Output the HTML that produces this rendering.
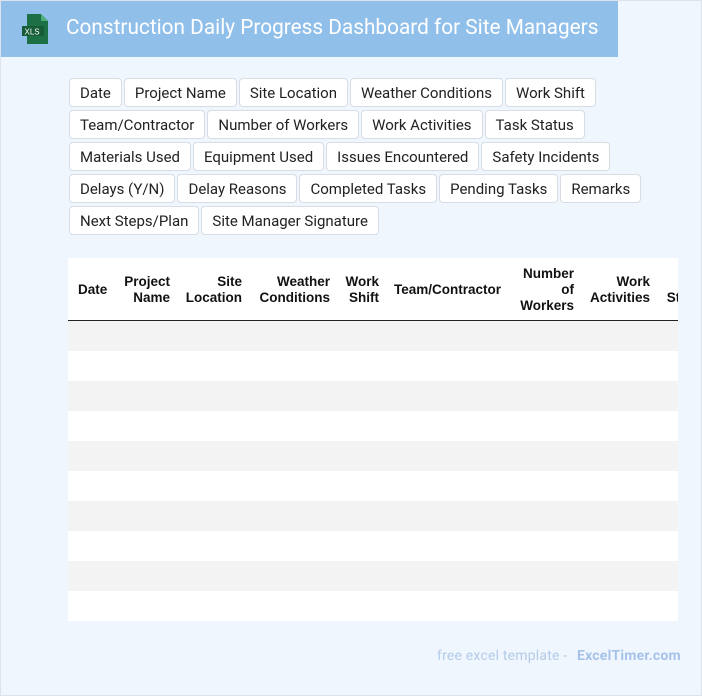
<!DOCTYPE html>
<html><head><meta charset="utf-8"><style>
*{margin:0;padding:0;box-sizing:border-box}
body{width:702px;height:696px;background:#f0f6fe;position:relative;overflow:hidden;font-family:"Roboto","Liberation Sans",sans-serif}
.frame{position:absolute;left:0;top:0;width:702px;height:696px;border:1px solid #dde3ea;pointer-events:none}
.hdr{position:absolute;left:0;top:0;width:618px;height:57px;background:#90bfea}
.hdr h1{position:absolute;left:66px;top:16px;font-size:20.8px;font-weight:400;color:#fff;white-space:nowrap}
.tags{position:absolute;left:69px;top:78px;width:580px}
.tag{display:inline-block;height:29px;line-height:29px;padding:0 10px;background:#fff;border:1px solid #d8dde3;border-radius:4px;font-size:15px;color:#222;margin:0 2px 3px 0;vertical-align:top}
.tbl{position:absolute;left:68px;top:258px;width:610px;height:363px;background:#fff;overflow:hidden}
.th{position:absolute;font:bold 13.5px/16px "Liberation Sans",Arial,sans-serif;color:#111;text-align:right}
.line{position:absolute;left:0;top:62px;width:610px;height:1px;background:#222}
.row{position:absolute;left:0;width:610px;height:30px}
.foot{position:absolute;top:648px;left:437px;font-size:14px;color:#b3cbe9;white-space:nowrap;letter-spacing:0.2px}
.foot b{color:#a6c2ea;margin-left:6px}
</style></head><body>
<div class="hdr">
<svg style="position:absolute;left:22px;top:14px" width="28" height="30" viewBox="0 0 28 30"><path d="M5 0h14l7 7v23H5z" fill="#1d7044"/><path d="M19 0v7h7z" fill="#4caf7a"/><rect x="0" y="12" width="22" height="10" fill="#155c37"/><text x="2.5" y="20.5" font-family="Liberation Sans" font-size="8" fill="#fff">XLS</text></svg>
<h1>Construction Daily Progress Dashboard for Site Managers</h1></div>
<div class="tags">
<span class="tag">Date</span><span class="tag">Project Name</span><span class="tag">Site Location</span><span class="tag">Weather Conditions</span><span class="tag">Work Shift</span><span class="tag">Team/Contractor</span><span class="tag">Number of Workers</span><span class="tag">Work Activities</span><span class="tag">Task Status</span><span class="tag">Materials Used</span><span class="tag">Equipment Used</span><span class="tag">Issues Encountered</span><span class="tag">Safety Incidents</span><span class="tag">Delays (Y/N)</span><span class="tag">Delay Reasons</span><span class="tag">Completed Tasks</span><span class="tag">Pending Tasks</span><span class="tag">Remarks</span><span class="tag">Next Steps/Plan</span><span class="tag">Site Manager Signature</span>
</div>
<div class="tbl">
<div class="th" style="left:10px;top:24px">Date</div>
<div class="th" style="left:40px;top:16px;width:62px">Project<br>Name</div>
<div class="th" style="left:104px;top:16px;width:70px">Site<br>Location</div>
<div class="th" style="left:176px;top:16px;width:86px">Weather<br>Conditions</div>
<div class="th" style="left:266px;top:16px;width:45px">Work<br>Shift</div>
<div class="th" style="left:326px;top:24px">Team/Contractor</div>
<div class="th" style="left:436px;top:8px;width:70px">Number<br>of<br>Workers</div>
<div class="th" style="left:506px;top:16px;width:76px">Work<br>Activities</div>
<div class="th" style="left:594px;top:16px;width:46px">Task<br>Status</div>
<div class="line"></div>
<div class="row" style="top:63px;background:#f3f3f3"></div>
<div class="row" style="top:123px;background:#f3f3f3"></div>
<div class="row" style="top:183px;background:#f3f3f3"></div>
<div class="row" style="top:243px;background:#f3f3f3"></div>
<div class="row" style="top:303px;background:#f3f3f3"></div>
</div>
<div class="foot">free excel template - <b>ExcelTimer.com</b></div>
<div class="frame"></div>
</body></html>
